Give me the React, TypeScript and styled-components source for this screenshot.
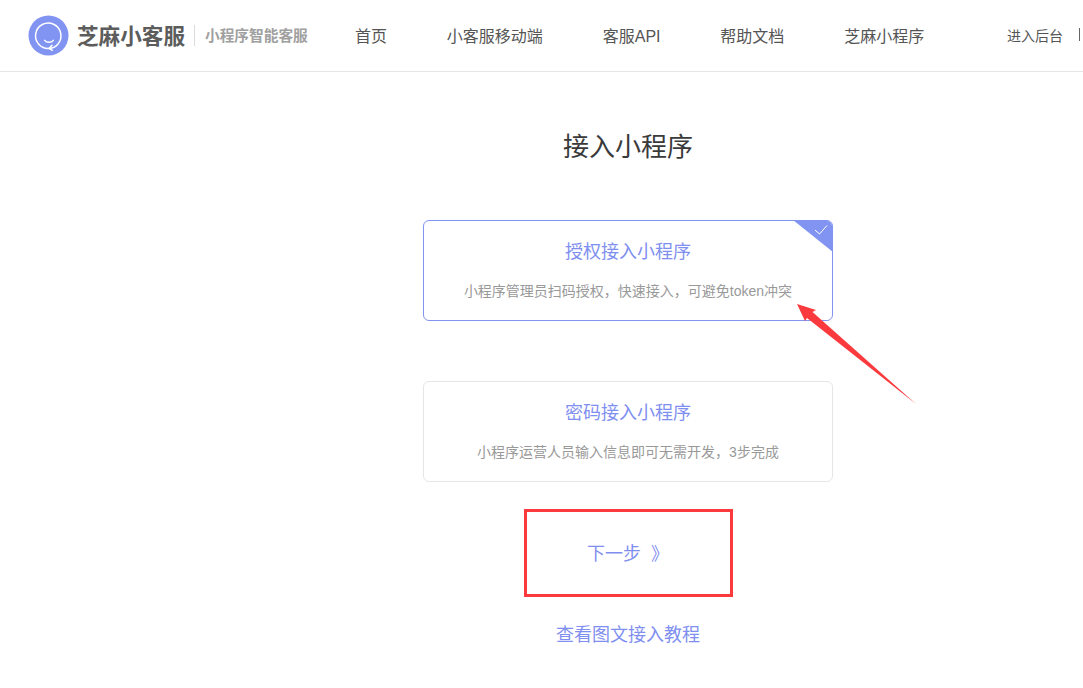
import React from 'react';
import styled, { createGlobalStyle } from 'styled-components';

const GlobalStyle = createGlobalStyle`
  html, body {
    margin: 0;
    padding: 0;
    height: 100%;
    overflow: hidden;
    background: #fff;
    font-family: "Liberation Sans", "Noto Sans CJK SC", sans-serif;
  }
`;

// the original page is wider than the window, its right part is cut off
const Page = styled.div`
  width: 1256px;
`;

const Header = styled.header`
  height: 71px;
  border-bottom: 1px solid #e6e6e6;
  display: flex;
  align-items: center;
  padding-left: 28px;
`;

const Brand = styled.div`
  display: flex;
  align-items: center;
  width: 327px;
`;

const BrandName = styled.span`
  margin: -2px 0 0 8px;
  font-size: 21.6px;
  font-weight: 700;
  color: #5c5c5c;
`;

const BrandDivider = styled.span`
  width: 1px;
  height: 21px;
  margin: 0 10px 0 9px;
  background: #dcdcdc;
`;

const BrandSlogan = styled.span`
  margin-top: -2px;
  font-size: 14.7px;
  font-weight: 700;
  color: #a0a0a0;
`;

const Nav = styled.nav`
  display: flex;
  gap: 59.85px;
  width: 652px;
  margin-top: -2px;
`;

const NavLink = styled.a`
  font-size: 16px;
  color: #555;
`;

const HeaderRight = styled.div`
  display: flex;
  align-items: center;
  gap: 16px;
  margin-top: -2px;
  font-size: 14px;
  color: #555;
`;

const Separator = styled.span`
  width: 1px;
  height: 13px;
  background: #666;
`;

const Main = styled.main`
  position: relative;
  display: flex;
  flex-direction: column;
  align-items: center;
`;

const Title = styled.h1`
  margin: 55px 0 0;
  height: 40px;
  line-height: 40px;
  font-size: 26px;
  font-weight: 400;
  color: #3a3a3a;
`;

const Card = styled.div<{ $active?: boolean }>`
  position: relative;
  box-sizing: border-box;
  width: 410px;
  height: 101px;
  border: 1px solid ${p => (p.$active ? '#8294f2' : '#e6e6e6')};
  border-radius: 6px;
  overflow: hidden;
  text-align: center;
  background: #fff;
  margin-top: ${p => (p.$active ? '53px' : '60px')};
`;

const CardTitle = styled.div`
  margin-top: 17px;
  line-height: 28px;
  font-size: 18px;
  color: #7f8ff0;
`;

const CardDesc = styled.div`
  margin-top: 14px;
  line-height: 22px;
  font-size: 14px;
  color: #999;
`;

const Corner = styled.svg`
  position: absolute;
  top: -1px;
  right: -1px;
`;

const NextButton = styled.a`
  box-sizing: border-box;
  width: 209px;
  height: 88px;
  margin-top: 27px;
  padding-bottom: 2px;
  border: 3px solid #fb3a3e;
  display: flex;
  align-items: center;
  justify-content: center;
  gap: 10px;
  font-size: 18px;
  color: #7f8ff0;
`;

const GuideLink = styled.a`
  margin-top: 24px;
  line-height: 28px;
  font-size: 18px;
  color: #7f8ff0;
`;

const Arrow = styled.svg`
  position: absolute;
  top: 0;
  left: 0;
  pointer-events: none;
`;

const LogoIcon = () => (
  <svg width="41" height="41" viewBox="0 0 41 41">
    <circle cx="20.5" cy="20.5" r="20" fill="#8294f2" />
    <path
      d="M21.5 33.4A12.7 12.7 0 1 1 30 28.9C28.3 31 25.5 33 21.5 33.4"
      fill="none"
      stroke="#fff"
      strokeWidth="1.5"
      strokeLinecap="round"
    />
    <path d="M24 30.2L21 33.4L24.3 35.3" fill="none" stroke="#fff" strokeWidth="1.4" strokeLinecap="round" />
    <path d="M16.7 25.3C18.5 27.8 23.5 27.8 25.3 25.3" fill="none" stroke="#fff" strokeWidth="1.4" strokeLinecap="round" />
  </svg>
);

const navItems = ['首页', '小客服移动端', '客服API', '帮助文档', '芝麻小程序'];

const App: React.FC = () => {
  return (
    <Page>
      <GlobalStyle />
      <Header>
        <Brand>
          <LogoIcon />
          <BrandName>芝麻小客服</BrandName>
          <BrandDivider />
          <BrandSlogan>小程序智能客服</BrandSlogan>
        </Brand>
        <Nav>
          {navItems.map(item => (
            <NavLink key={item}>{item}</NavLink>
          ))}
        </Nav>
        <HeaderRight>
          <span>进入后台</span>
          <Separator />
        </HeaderRight>
      </Header>
      <Main>
        <Title>接入小程序</Title>
        <Card $active>
          <CardTitle>授权接入小程序</CardTitle>
          <CardDesc>小程序管理员扫码授权，快速接入，可避免token冲突</CardDesc>
          <Corner width="40" height="32" viewBox="0 0 40 32">
            <path d="M0 0H40V32Z" fill="#8294f2" />
            <path d="M22 10L26.5 14L34 5.5" fill="none" stroke="#fff" strokeWidth="1" />
          </Corner>
        </Card>
        <Card>
          <CardTitle>密码接入小程序</CardTitle>
          <CardDesc>小程序运营人员输入信息即可无需开发，3步完成</CardDesc>
        </Card>
        <NextButton>
          <span>下一步</span>
          <span>》</span>
        </NextButton>
        <GuideLink>查看图文接入教程</GuideLink>
        {/* red annotation arrow drawn over the page */}
        <Arrow width="1256" height="616" viewBox="0 72 1256 616">
          <path d="M797 304L816 310L812.5 312L916 404L807 318L805 321Z" fill="#fb3a3e" />
        </Arrow>
      </Main>
    </Page>
  );
};

export default App;
